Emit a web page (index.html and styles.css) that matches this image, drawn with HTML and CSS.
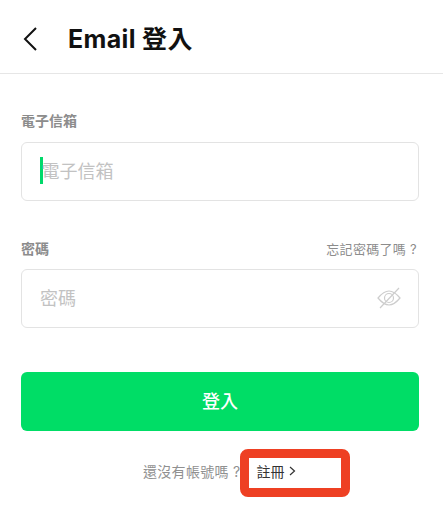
FILE: index.html
```html
<!DOCTYPE html>
<html lang="zh-Hant">
<head>
<meta charset="utf-8">
<title>Email 登入</title>
<link rel="stylesheet" href="styles.css">
</head>
<body>
<header class="topbar">
  <svg class="back" width="16" height="26" viewBox="0 0 16 26"><path d="M14 2 L3 13 L14 24" fill="none" stroke="#111" stroke-width="2"/></svg>
  <h1 class="title">Email 登入</h1>
</header>
<main class="form">
  <div class="field field-email">
    <div class="label-row"><span class="label">電子信箱</span></div>
    <div class="box"><span class="caret"></span><span class="placeholder">電子信箱</span></div>
  </div>
  <div class="field field-pass">
    <div class="label-row"><span class="label">密碼</span><span class="forgot">忘記密碼了嗎 ?</span></div>
    <div class="box box-pass"><span class="placeholder">密碼</span>
      <svg class="eye" width="24" height="22" viewBox="0 0 24 22"><path d="M1 11 C6 5 9 4 12 4 C15 4 18 5 23 11 C18 17 15 18 12 18 C9 18 6 17 1 11 Z" fill="none" stroke="#cdcdcd" stroke-width="1.2"/><circle cx="12" cy="11" r="4.5" fill="none" stroke="#cdcdcd" stroke-width="1.2"/><path d="M3 21 L22 1" stroke="#cdcdcd" stroke-width="1.2"/></svg>
    </div>
  </div>
  <button class="submit">登入</button>
  <div class="signup">
    <span class="signup-q">還沒有帳號嗎 ?</span>
    <span class="signup-link">註冊
      <svg width="7" height="10" viewBox="0 0 7 10"><path d="M1 1 L5.5 5 L1 9" fill="none" stroke="#333" stroke-width="1.2"/></svg>
      <span class="highlight"></span>
    </span>
  </div>
</main>
</body>
</html>
```
FILE: styles.css
```css
* { box-sizing: border-box; }
html, body { margin: 0; padding: 0; background: #fff; }
body {
  width: 443px; height: 513px; overflow: hidden;
  font-family: "Inter", "Noto Sans CJK TC", sans-serif;
}
.topbar {
  height: 74px; display: flex; align-items: center; gap: 30px;
  padding: 4px 0 0 22px; border-bottom: 1px solid #e6e6e6;
}
.back { flex: none; }
.title { margin: 0 0 1px; font-size: 25px; font-weight: 700; color: #111; line-height: 32px; letter-spacing: 0.35px; position: relative; top: 1px; }
.form { padding: 0 24px 0 21px; }
.field-email { padding-top: 36px; }
.field-pass { padding-top: 37px; }
.label-row {
  display: flex; justify-content: space-between; align-items: center;
  height: 20px; margin-bottom: 12px;
}
.field-pass .label-row { margin-bottom: 11px; }
.label { font-size: 14px; font-weight: 700; color: #8c8c8c; }
.forgot { font-size: 13px; color: #8c8c8c; letter-spacing: 0.3px; padding-right: 2px; }
.box {
  height: 59px; border: 1px solid #e3e3e3; border-radius: 6px;
  display: flex; align-items: center; padding-left: 18px; padding-bottom: 3px;
}
.box-pass { justify-content: space-between; padding-right: 17px; padding-bottom: 1px; }
.placeholder { font-size: 18px; color: #c2c2c2; }
.box-pass .placeholder { padding-bottom: 3px; }
.caret { width: 2.5px; height: 27px; background: #00d96a; margin-right: -1px; flex: none; }
.submit {
  display: block; width: 100%; height: 59px; margin-top: 44px; padding-bottom: 4px;
  border: 0; border-radius: 6px; background: #00dd66; color: #fff;
  font: 500 18px "Inter", "Noto Sans CJK TC", sans-serif;
}
.signup {
  display: flex; align-items: center; gap: 16px;
  margin-top: 30px; height: 20px; padding-left: 122px;
}
.signup-q { font-size: 14px; color: #909090; letter-spacing: 0.3px; }
.signup-link { font-size: 14px; color: #333; position: relative; display: flex; align-items: center; gap: 4px; }
.highlight {
  position: absolute; left: -17px; top: -12px; width: 110px; height: 48px;
  border: 9px solid #ee4023; border-radius: 8px;
}
```
